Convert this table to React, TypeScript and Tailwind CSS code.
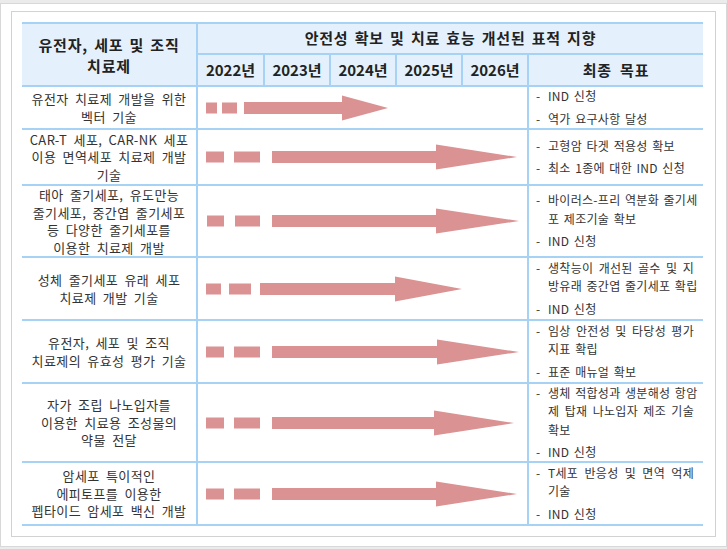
import React from "react";

type ArrowSpec = {
  r1: [number, number];
  r2: [number, number];
  shaft: number;
  head: number;
  tip: number;
};

const STD: ArrowSpec = { r1: [8, 26], r2: [36, 62], shaft: 74, head: 238, tip: 319 };

type Row = {
  h: string;
  left: string[];
  goals: string[][];
  arrow: ArrowSpec;
};

const rows: Row[] = [
  {
    h: "h-[43px]",
    left: ["유전자 치료제 개발을 위한", "벡터 기술"],
    goals: [["IND 신청"], ["역가 요구사항 달성"]],
    arrow: { r1: [8, 19], r2: [24, 39], shaft: 46, head: 144, tip: 190 },
  },
  {
    h: "h-[56px]",
    left: ["CAR-T 세포, CAR-NK 세포", "이용 면역세포 치료제 개발", "기술"],
    goals: [["고형암 타겟 적용성 확보"], ["최소 1종에 대한 IND 신청"]],
    arrow: STD,
  },
  {
    h: "h-[72px]",
    left: ["태아 줄기세포, 유도만능", "줄기세포, 중간엽 줄기세포", "등 다양한 줄기세포를", "이용한 치료제 개발"],
    goals: [["바이러스-프리 역분화 줄기세", "포 제조기술 확보"], ["IND 신청"]],
    arrow: { r1: [9, 26], r2: [37, 62], shaft: 74, head: 238, tip: 321 },
  },
  {
    h: "h-[63px]",
    left: ["성체 줄기세포 유래 세포", "치료제 개발 기술"],
    goals: [["생착능이 개선된 골수 및 지", "방유래 중간엽 줄기세포 확립"], ["IND 신청"]],
    arrow: { r1: [8, 23], r2: [31, 53], shaft: 62, head: 197, tip: 264 },
  },
  {
    h: "h-[63px]",
    left: ["유전자, 세포 및 조직", "치료제의 유효성 평가 기술"],
    goals: [["임상 안전성 및 타당성 평가", "지표 확립"], ["표준 매뉴얼 확보"]],
    arrow: { r1: [8, 26], r2: [36, 62], shaft: 74, head: 239, tip: 321 },
  },
  {
    h: "h-[79px]",
    left: ["자가 조립 나노입자를", "이용한 치료용 조성물의", "약물 전달"],
    goals: [["생체 적합성과 생분해성 항암", "제 탑재 나노입자 제조 기술", "확보"], ["IND 신청"]],
    arrow: { r1: [8, 26], r2: [36, 62], shaft: 74, head: 236, tip: 316 },
  },
  {
    h: "h-[63px]",
    left: ["암세포 특이적인", "에피토프를 이용한", "펩타이드 암세포 백신 개발"],
    goals: [["T세포 반응성 및 면역 억제", "기술"], ["IND 신청"]],
    arrow: STD,
  },
];

function Arrow({ a }: { a: ArrowSpec }) {
  const c = "#da9292";
  return (
    <svg width="329" height="26" viewBox="0 0 329 26" className="block">
      <rect x={a.r1[0]} y={7.5} width={a.r1[1] - a.r1[0]} height={11} fill={c} />
      <rect x={a.r2[0]} y={7.5} width={a.r2[1] - a.r2[0]} height={11} fill={c} />
      <polygon
        points={`${a.shaft},7 ${a.head},7 ${a.head},0.5 ${a.tip},13 ${a.head},25.5 ${a.head},19 ${a.shaft},19`}
        fill={c}
      />
    </svg>
  );
}

const years = ["2022년", "2023년", "2024년", "2025년", "2026년"];

export default function App() {
  const font = { fontFamily: '"Noto Sans CJK KR", "Noto Sans", sans-serif' };
  const hdr = "text-[15px] font-bold text-[#222] tracking-[0.8px] [word-spacing:2px]";
  return (
    <div className="w-[727px] h-[549px] bg-[#ebebeb] pt-[3px] overflow-hidden" style={font}>
      <div className="w-[727px] h-[544px] bg-white border border-[#d8d8d8] pl-[10px] pt-[7px]">
        <div className="w-[705px] h-[526px] border border-[#d2d2d2] pt-[10px] pl-[10px]">
          <div className="w-[681px] border-t-2 border-[#a6d2f6]">
            {/* header */}
            <div className="flex">
              <div className={`w-[176px] h-[63px] bg-[#e4f1fc] border-r-2 border-b-2 border-[#a6d2f6] flex flex-col items-center justify-center leading-[21px] ${hdr}`}>
                <div>유전자, 세포 및 조직</div>
                <div>치료제</div>
              </div>
              <div className="w-[505px] flex flex-col">
                <div className={`h-[31px] bg-[#e4f1fc] border-b-2 border-[#a6d2f6] flex items-center justify-center ${hdr}`}>
                  안전성 확보 및 치료 효능 개선된 표적 지향
                </div>
                <div className="flex h-[32px]">
                  {years.map((y, i) => (
                    <div
                      key={y}
                      className={`${i === 0 ? "w-[67px]" : "w-[66px]"} bg-[#e4f1fc] border-r-2 border-b-2 border-[#a6d2f6] flex items-center justify-center text-[15px] font-bold text-[#222]`}
                    >
                      {y}
                    </div>
                  ))}
                  <div className={`w-[174px] bg-[#e4f1fc] border-b-2 border-[#a6d2f6] flex items-center justify-center ${hdr} [word-spacing:4px]`}>
                    최종 목표
                  </div>
                </div>
              </div>
            </div>
            {/* body */}
            {rows.map((r, idx) => (
              <div key={idx} className={`flex ${r.h} border-b-2 border-[#a6d2f6]`}>
                <div className="w-[176px] border-r-2 border-[#a6d2f6] flex flex-col items-center justify-center text-[13px] text-[#333] leading-[17.5px] tracking-[0.4px] [word-spacing:3px]">
                  {r.left.map((l, j) => (
                    <div key={j} className="whitespace-nowrap">{l}</div>
                  ))}
                </div>
                <div className="w-[331px] border-r-2 border-[#a6d2f6] flex items-center">
                  <Arrow a={r.arrow} />
                </div>
                <div className="w-[174px] flex flex-col justify-center gap-[4px] pl-[7px] pr-[9px] text-[12px] text-[#333] leading-[18.5px] tracking-[0.3px] [word-spacing:1.5px]">
                  {r.goals.map((g, j) => (
                    <div key={j} className="flex">
                      <span className="w-[12px] shrink-0">-</span>
                      <div className="flex-1 min-w-0">
                        {g.map((line, k) => (
                          <div
                            key={k}
                            className={
                              k < g.length - 1
                                ? "text-justify [text-align-last:justify] whitespace-nowrap"
                                : "whitespace-nowrap"
                            }
                          >
                            {line}
                          </div>
                        ))}
                      </div>
                    </div>
                  ))}
                </div>
              </div>
            ))}
          </div>
        </div>
      </div>
    </div>
  );
}
